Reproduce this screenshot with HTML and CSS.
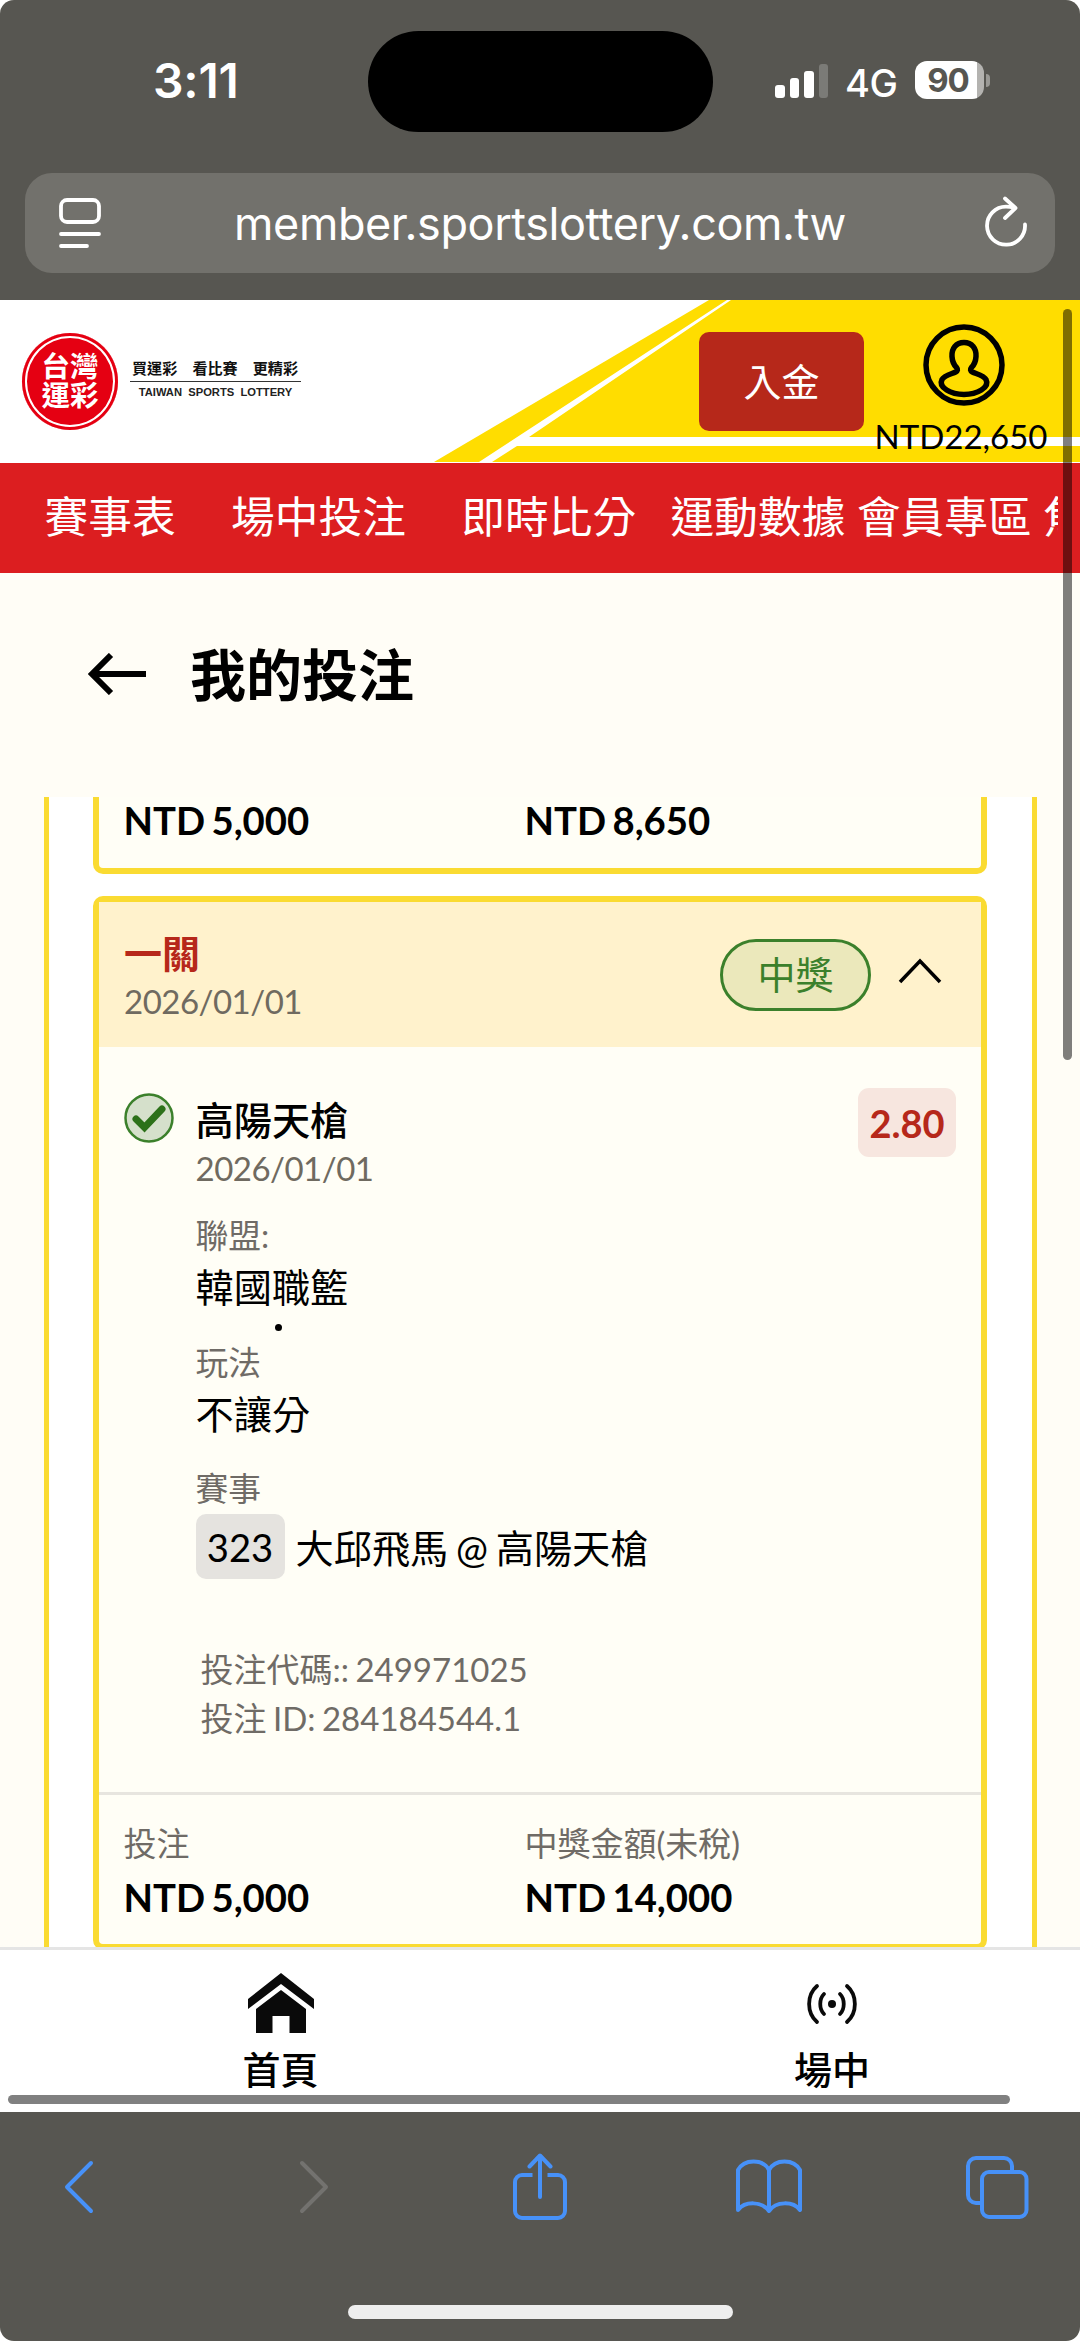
FILE: index.html
```html
<!DOCTYPE html>
<html lang="zh-Hant">
<head>
<meta charset="utf-8">
<title>我的投注</title>
<link rel="stylesheet" href="styles.css">
</head>
<body>
<div class="phone">
  <div class="browser-top">
    <div class="status">
      <span class="time">3:11</span>
      <span class="island"></span>
      <span class="signal"><i class="bar b1"></i><i class="bar b2"></i><i class="bar b3"></i><i class="bar b4"></i></span>
      <span class="network">4G</span>
      <span class="battery">90</span>
      <span class="battery-cap"></span>
    </div>
    <div class="address">
      <svg class="reader" width="44" height="52" viewBox="0 0 44 52" fill="none" stroke="#fff" stroke-width="3.800" stroke-linecap="round"><rect x="4" y="3" width="38" height="22" rx="6"/><path d="M4 37h38M4 49h26"/></svg>
      <span class="url">member.sportslottery.com.tw</span>
      <svg class="reload" width="44" height="54" viewBox="0 0 44 54" fill="none" stroke="#fff" stroke-width="3.800" stroke-linecap="round" stroke-linejoin="round"><path d="M41 28.500A19 19 0 1 1 22 10.700q4 0 8 1"/><path d="M21 2.500L31.500 12 21 22"/></svg>
    </div>
  </div>

  <header class="site-header">
    <svg class="stripes" width="1080" height="162" viewBox="0 0 1080 162"><path fill="#ffdd00" d="M434 162L709 0H1080V162z"/><path fill="#fff" d="M479 162L727 0h4L529 137H1080v9H517L492 162z"/></svg>
    <div class="seal"><span>台灣</span><span>運彩</span></div>
    <div class="brand">
      <span class="slogan">買運彩　看比賽　更精彩</span>
      <span class="brand-en">TAIWAN&nbsp; SPORTS&nbsp; LOTTERY</span>
    </div>
    <button class="deposit">入金</button>
    <div class="account">
      <svg width="82" height="82" viewBox="0 0 82 82" fill="none" stroke="#000" stroke-width="5.500"><circle cx="41" cy="41" r="38"/><path d="M41 18.500c-8 0-12.500 6-12 14 .3 5 1.500 8 4.500 11 1.500 2 1.200 3.500-.8 4.500-4.500 2-11.700 3.500-13.700 7.500-4 8 9 15 22 15s26-7 22-15c-2-4-9.200-5.500-13.700-7.500-2-1-2.300-2.500-.8-4.500 3-3 4.200-6 4.500-11 .5-8-4-14-12-14z"/></svg>
      <span>NTD22,650</span>
    </div>
  </header>

  <nav class="main-nav">
    <a class="wide">賽事表</a><a class="wide">場中投注</a><a class="mid">即時比分</a><a>運動數據</a><a>會員專區</a><a>焦點</a>
  </nav>

  <main>
    <div class="title">
      <svg width="60" height="42" viewBox="0 0 60 42" fill="none" stroke="#000" stroke-width="6"><path d="M59 21H6M24 2L5 21l19 19"/></svg>
      <h1>我的投注</h1>
    </div>
    <div class="list">
      <section class="card previous">
        <div class="amounts"><strong>NTD 5,000</strong><strong>NTD 8,650</strong></div>
      </section>
      <section class="card current">
        <div class="card-head">
          <div><h2>一關</h2><time>2026/01/01</time></div>
          <span class="won">中獎</span>
          <svg width="44" height="26" viewBox="0 0 44 26" fill="none" stroke="#000" stroke-width="3.500"><path d="M2 24L22 3l20 21"/></svg>
        </div>
        <div class="bet">
          <svg class="check" width="50" height="50" viewBox="0 0 50 50"><circle cx="25" cy="25" r="23.500" fill="#d5e0cb" stroke="#3b802b" stroke-width="2.500"/><path d="M12 26l8.500 8.500L38 16" fill="none" stroke="#2c7119" stroke-width="7" stroke-linecap="round"/></svg>
          <div class="details">
            <b class="pick">高陽天槍</b>
            <time>2026/01/01</time>
            <span class="label league">聯盟:</span>
            <span class="value">韓國職籃</span>
            <span class="dot"></span>
            <span class="label play">玩法</span>
            <span class="value">不讓分</span>
            <span class="label match">賽事</span>
            <span class="game"><span class="code">323</span>大邱飛馬 @ 高陽天槍</span>
            <span class="ref first">投注代碼:: 249971025</span>
            <span class="ref">投注 ID: 284184544.1</span>
          </div>
          <span class="odds">2.80</span>
        </div>
        <div class="totals">
          <div><span>投注</span><strong>NTD 5,000</strong></div>
          <div><span>中獎金額(未稅)</span><strong>NTD 14,000</strong></div>
        </div>
      </section>
    </div>
  </main>

  <nav class="tabs">
    <a><svg width="68" height="62" viewBox="0 0 68 62" fill="#0a0a0a"><path d="M34 1L67 27v10L34 12 1 37V27z"/><path d="M34 18L59 37V61H42.500V44h-17V61H9V37z"/></svg><span>首頁</span></a>
    <a><svg width="52" height="62" viewBox="0 0 52 62" fill="none" stroke="#0a0a0a" stroke-width="3.800" stroke-linecap="round"><circle cx="26" cy="32" r="4" fill="#0a0a0a" stroke="none"/><path d="M18 22c-5 5-5 15 0 20M34 22c5 5 5 15 0 20M11 14c-10.500 9-10.500 27 0 36M41 14c10.500 9 10.500 27 0 36"/></svg><span>場中</span></a>
  </nav>

  <footer class="toolbar">
    <div class="tools">
      <svg width="30" height="54" viewBox="0 0 30 54"><path d="M27 3L3 27l24 24"/></svg>
      <svg class="forward" width="30" height="54" viewBox="0 0 30 54"><path d="M3 3l24 24L3 51"/></svg>
      <svg class="share" width="54" height="68" viewBox="0 0 54 68"><path stroke-linecap="butt" d="M19.500 22H9a7 7 0 0 0-7 7v29a7 7 0 0 0 7 7h36a7 7 0 0 0 7-7V29a7 7 0 0 0-7-7H34.500"/><path d="M27 44V3M16.500 13.500L27 2.500l10.500 11"/></svg>
      <svg class="book" width="66" height="58" viewBox="0 0 66 58"><path d="M33 12C27 .5 8 .5 2 12V52C9 43 26 43 33 53 40 43 57 43 64 52V12C58 .5 39 .5 33 12zV53"/></svg>
      <svg class="pages" width="64" height="64" viewBox="0 0 64 64"><rect x="17" y="17" width="44.500" height="45" rx="7"/><path d="M17 48h-6a8 8 0 0 1-8-8V11a8 8 0 0 1 8-8h28a8 8 0 0 1 8 8v6"/></svg>
    </div>
    <div class="home-bar"></div>
  </footer>
  <span class="scroll-y"></span>
  <span class="scroll-x"></span>
</div>
</body>
</html>
```

FILE: styles.css
```css
* { box-sizing: border-box; }
body { margin: 0; background: #fff; font-family: Lato, "Noto Sans CJK TC", sans-serif; color: #000; }
svg { display: block; flex: none; }
h1, h2 { margin: 0; }
.phone { position: relative; width: 1080px; height: 2341px; overflow: hidden; border-radius: 14px; display: flex; flex-direction: column; background: #fffdf6; }

.browser-top { height: 300px; flex: none; background: #575651; color: #fff; font-family: Inter, sans-serif; }
.status { height: 173px; padding: 31px 0 0 153px; display: flex; align-items: flex-start; }
.time { width: 215px; font-size: 48px; line-height: 56px; font-weight: 600; margin-top: 22px; letter-spacing: -.2px; }
.island { width: 345px; height: 101px; border-radius: 51px; background: #000; margin-right: 62px; }
.signal { display: flex; align-items: flex-end; gap: 5px; width: 70px; height: 35px; margin-top: 32px; }
.bar { width: 9.500px; border-radius: 3px; background: #fff; }
.b1 { height: 13px; }
.b2 { height: 20px; }
.b3 { height: 27px; }
.b4 { height: 34px; opacity: .22; }
.network { width: 70px; font-size: 38px; line-height: 46px; margin-top: 29px; font-weight: 500; letter-spacing: -.5px; }
.battery { width: 69px; height: 38px; border-radius: 12px; margin-top: 30px; padding-right: 3px; text-align: center; font-size: 33px; line-height: 39px; font-weight: 700; color: #575651; background: linear-gradient(90deg, #fff 62px, #b4b3b0 62px); letter-spacing: -1px; }
.battery-cap { width: 4px; height: 13px; margin: 43px 0 0 2px; background: #9a9995; border-radius: 0 6px 6px 0; }
.address { width: 1030px; height: 100px; margin-left: 25px; padding: 0 27px 0 32px; border-radius: 27px; background: #72716c; display: grid; grid-template-columns: 44px 1fr 44px; align-items: center; }
.url { font-size: 45px; line-height: 60px; text-align: center; margin-right: 5px; padding-top: 2px; white-space: nowrap; letter-spacing: -.42px; }

.site-header { position: relative; height: 163px; flex: none; padding: 33px 0 0 22px; background: #fff; display: flex; align-items: flex-start; }
.stripes { position: absolute; left: 0; top: 0; }
.seal { position: relative; width: 96px; height: 97px; border-radius: 50%; background: #e50012; color: #fff; font-size: 28.500px; line-height: 29px; font-weight: 700; padding-bottom: 2px; display: flex; flex-direction: column; align-items: center; justify-content: center; box-shadow: inset 0 0 0 3px #e50012, inset 0 0 0 5px #fff; }
.brand { width: 171px; margin: 25px 398px 0 12px; display: flex; flex-direction: column; align-items: center; }
.slogan { width: 171px; padding: 0 2px; height: 24px; line-height: 20px; font-size: 15.100px; font-weight: 700; color: #111; border-bottom: 1px solid #333; white-space: nowrap; }
.brand-en { font: bold 11.200px/20px "Liberation Sans", sans-serif; margin-top: 0; white-space: nowrap; color: #222; }
.deposit { position: relative; width: 165px; height: 99px; margin: -1px 0 0; padding: 0 0 4px; border: 0; border-radius: 10px; background: #b6281a; color: #fff; font: 38px/95px "Noto Sans CJK TC", sans-serif; }
.account { position: relative; width: 194px; margin: -9px 0 0; display: flex; flex-direction: column; align-items: center; font-size: 33px; line-height: 40px; }
.account svg { margin-left: 5px; }
.account span { margin-top: 10px; }

.main-nav { height: 110px; flex: none; width: 1080px; padding-left: 44.500px; background: #dc1e20; color: #fff; display: flex; font-size: 43.700px; line-height: 107px; border-right: 22px solid #dc1e20; overflow: hidden; white-space: nowrap; }
.main-nav a { margin-right: 11.500px; }
.main-nav .wide { margin-right: 55.500px; }
.main-nav .mid { margin-right: 34.500px; }

main { height: 1374px; flex: none; display: flex; flex-direction: column; }
.title { height: 224px; flex: none; padding: 0 0 22px 87px; display: flex; align-items: center; gap: 43px; }
.title h1 { font-size: 56px; line-height: 70px; font-weight: 700; padding-top: 2px; }
.list { width: 993px; height: 1152px; margin-left: 44px; padding: 0 44px; border: solid #fadb32; border-width: 0 5px; background: #fff; overflow: hidden; }
.card { border: 6px solid #fadb32; border-radius: 10px; background: #fffef6; width: 894px; }
strong { font-size: 38.300px; line-height: 46px; font-weight: 700; word-spacing: -3px; }
.previous { height: 77px; margin-bottom: 22px; border-top: 0; border-radius: 0 0 10px 10px; padding: 0 0 0 24.500px; }
.amounts { display: grid; grid-template-columns: 401px 1fr; }
.current { height: 1054px; }
.card-head { height: 145px; padding: 28px 0 0 25px; background: #fff2cc; display: flex; }
.card-head div { width: 596px; flex: none; }
h2 { font-size: 38px; line-height: 46px; color: #b6281a; font-weight: 700; }
time { display: block; font-size: 33px; line-height: 40px; color: #6f6a60; letter-spacing: -.5px; margin-top: 5px; }
.won { width: 151px; flex: none; height: 72px; margin: 9px 27px 0 0; border: 3px solid #3b802b; border-radius: 36px; background: #ebe8bb; color: #3b802b; font-size: 38px; line-height: 64px; text-align: center; }
.card-head svg { margin-top: 28px; }
.bet { height: 745px; padding: 41px 0 0 24.500px; display: flex; align-items: flex-start; }
.check { margin-top: 5px; }
.details { width: 684.500px; flex: none; padding-left: 22px; display: flex; flex-direction: column; align-items: flex-start; font-size: 38.200px; }
.pick { line-height: 46px; margin-top: 9px; font-weight: 500; }
.label { font-size: 32.800px; line-height: 40px; color: #6f6b66; }
.league { margin-top: 28px; }
.value { line-height: 46px; margin-top: 8px; }
.dot { width: 7px; height: 7px; border-radius: 50%; background: #000; margin: 14px 0 0 79px; }
.play { margin-top: 12px; }
.match { margin-top: 32px; }
.game { display: flex; align-items: center; margin-top: 5px; height: 65px; white-space: pre; word-spacing: -2px; }
.code { width: 89px; height: 65px; margin-right: 11px; border-radius: 10px; background: #e5e3df; text-align: center; line-height: 67px; }
.ref { margin-left: 5px; font-size: 33px; line-height: 49px; color: #6f6b66; word-spacing: -2px; }
.first { margin-top: 66px; }
.odds { width: 98px; flex: none; height: 69px; border-radius: 11px; background: #f7e6df; color: #b6281a; font-size: 38px; font-weight: 700; line-height: 70px; text-align: center; }
.totals { height: 152px; border-top: 3px solid #e7e5df; padding: 27px 0 0 24.500px; display: grid; grid-template-columns: 401px 1fr; }
.totals div { display: flex; flex-direction: column; }
.totals span { font-size: 33px; line-height: 42px; color: #6f6b66; }
.totals strong { margin-top: 10px; }

.tabs { height: 165px; flex: none; background: #fff; border-top: 3px solid #e5e5e5; display: flex; }
.tabs a { width: 561px; flex: none; padding-top: 22px; display: flex; flex-direction: column; align-items: center; font-size: 38px; line-height: 46px; font-weight: 500; }
.tabs a + a { width: 542px; }
.tabs span { margin-top: 12px; }
.toolbar { height: 229px; flex: none; background: #575651; }
.tools { height: 150px; padding-left: 64px; display: flex; align-items: center; }
.tools svg { fill: none; stroke: #4791f8; stroke-width: 4; stroke-linecap: round; stroke-linejoin: round; }
.tools .forward { margin-left: 205px; stroke: #73726f; }
.tools .share { margin-left: 184px; }
.tools .book { margin-left: 169px; }
.tools .pages { margin-left: 163px; }
.home-bar { width: 385px; height: 14px; border-radius: 7px; background: #eee; margin: 43px 0 0 348px; }
.scroll-y { position: absolute; left: 1063px; top: 309px; width: 9px; height: 751px; border-radius: 5px; background: rgba(0,0,0,.5); }
.scroll-x { position: absolute; left: 8px; top: 2095px; width: 1002px; height: 9px; border-radius: 5px; background: #808080; }
```
